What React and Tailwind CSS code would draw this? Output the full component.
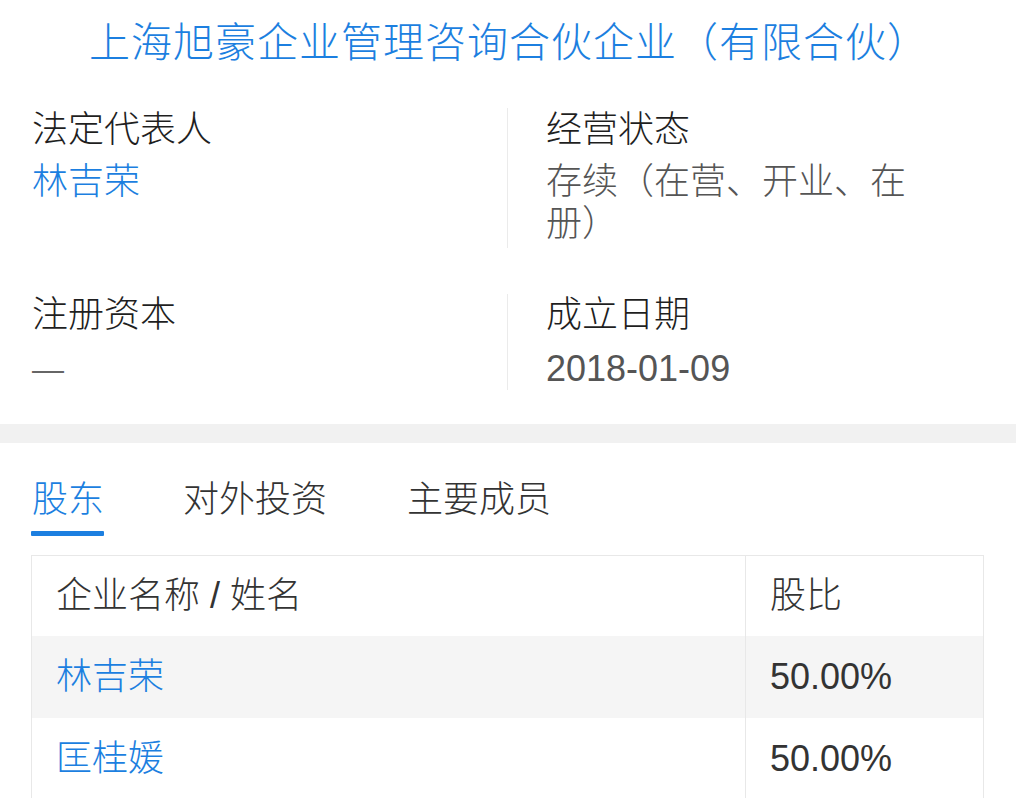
export default function App() {
  return (
    <div className="w-[1016px] h-[798px] overflow-hidden bg-white font-['Liberation_Sans','Noto_Sans_CJK_SC',sans-serif] font-light">
      <div className="pt-[19px] text-center text-[41px] leading-[48px] tracking-[1px] text-[#1c7fe0] pl-[2px]">
        上海旭豪企业管理咨询合伙企业（有限合伙）
      </div>

      <div className="mt-[41px] pl-[32px] flex">
        <div className="w-[475px] pt-px">
          <div className="text-[36px] leading-[42px] text-[#1f1f1f]">法定代表人</div>
          <div className="mt-[10px] text-[36px] leading-[42px] text-[#1c7fe0]">林吉荣</div>
        </div>
        <div className="border-l border-[#ebebeb] pl-[38px] h-[140px] pt-px">
          <div className="text-[36px] leading-[42px] text-[#1f1f1f]">经营状态</div>
          <div className="mt-[10px] w-[400px] text-[36px] leading-[42px] text-[#555555]">存续（在营、开业、在册）</div>
        </div>
      </div>

      <div className="mt-[46px] pl-[32px] flex">
        <div className="w-[475px]">
          <div className="text-[36px] leading-[42px] text-[#1f1f1f]">注册资本</div>
          <div className="mt-[12px] text-[32px] leading-[42px] text-[#666666]">—</div>
        </div>
        <div className="border-l border-[#ebebeb] pl-[38px] h-[96px]">
          <div className="text-[36px] leading-[42px] text-[#1f1f1f]">成立日期</div>
          <div className="mt-[12px] text-[36px] leading-[42px] text-[#555555]">2018-01-09</div>
        </div>
      </div>

      <div className="mt-[34px] h-[19px] bg-[#f1f1f1]" />

      <div className="pt-[36px] pl-[31px] flex gap-[78px]">
        <div className="flex flex-col items-start">
          <div className="text-[36px] leading-[42px] text-[#1c7fe0] px-px">股东</div>
          <div className="mt-[10px] h-[5px] w-[73px] bg-[#1c7fe0] rounded-[1px]" />
        </div>
        <div className="text-[36px] leading-[42px] text-[#333333]">对外投资</div>
        <div className="text-[36px] leading-[42px] text-[#333333] ml-[2px]">主要成员</div>
      </div>

      <div className="mt-[19px] ml-[31px] w-[953px] border-x border-t border-[#e8e8e8]">
        <div className="grid grid-cols-[714px_1fr] h-[80px] bg-white">
          <div className="flex items-center pl-[24px] border-r border-[#e8e8e8] text-[36px] text-[#333333]">企业名称 / 姓名</div>
          <div className="flex items-center pl-[24px] text-[36px] text-[#333333]">股比</div>
        </div>
        <div className="grid grid-cols-[714px_1fr] h-[82px] bg-[#f5f5f5]">
          <div className="flex items-center pl-[24px] border-r border-[#e8e8e8] text-[36px] text-[#1c7fe0]">林吉荣</div>
          <div className="flex items-center pl-[24px] text-[36px] text-[#333333]">50.00%</div>
        </div>
        <div className="grid grid-cols-[714px_1fr] h-[82px] bg-white">
          <div className="flex items-center pl-[24px] border-r border-[#e8e8e8] text-[36px] text-[#1c7fe0]">匡桂媛</div>
          <div className="flex items-center pl-[24px] text-[36px] text-[#333333]">50.00%</div>
        </div>
      </div>
    </div>
  );
}
